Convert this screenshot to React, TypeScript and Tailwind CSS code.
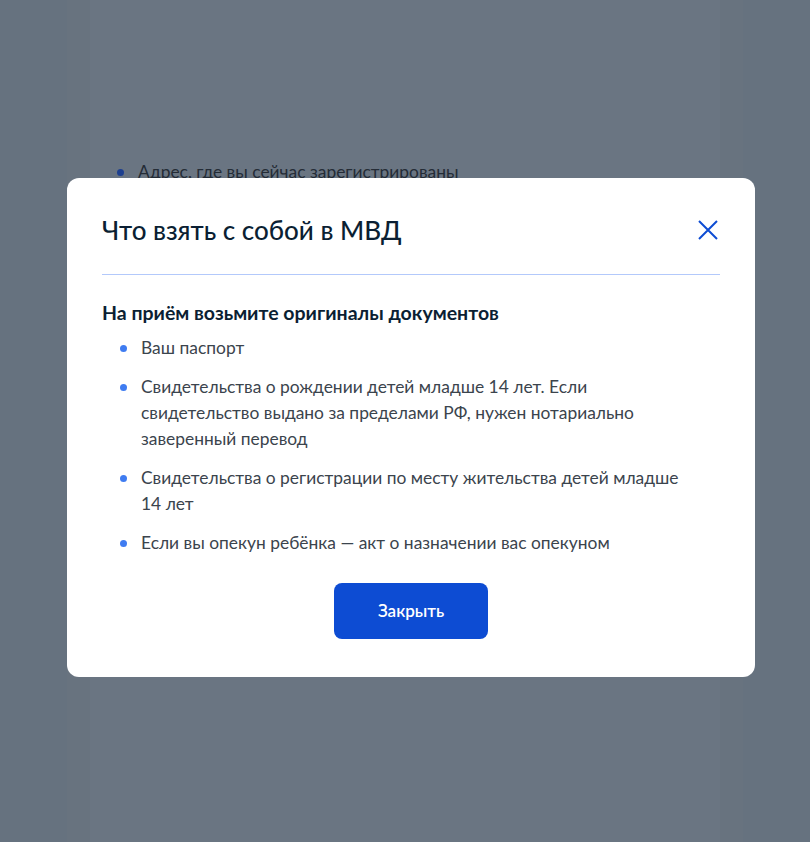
const items = [
  "Ваш паспорт",
  "Свидетельства о рождении детей младше 14 лет. Если свидетельство выдано за пределами РФ, нужен нотариально заверенный перевод",
  "Свидетельства о регистрации по месту жительства детей младше 14 лет",
  "Если вы опекун ребёнка — акт о назначении вас опекуном",
];

export default function App() {
  return (
    <div className="relative h-[842px] w-[810px] overflow-hidden bg-[#66727f] font-['Lato','Noto_Sans',sans-serif]">
      {/* page behind the overlay */}
      <div className="mx-[67px] h-full bg-[#68737f] px-[23px]">
        <div className="h-full bg-[#6a7582] pl-[27px] pt-[160px]">
          <div className="flex items-center gap-[14px] text-[17.4px] leading-[24px] text-[#242c36]">
            <span className="h-[7px] w-[7px] rounded-full bg-[#1d3f8f]" />
            <span>Адрес, где вы сейчас зарегистрированы</span>
          </div>
        </div>
      </div>

      {/* modal */}
      <div className="absolute left-[67px] top-[178px] w-[688px] rounded-[12px] bg-white px-[35px] pb-[38px] pt-[33px]">
        <div className="flex items-center justify-between">
          <h2 className="text-[26px] font-medium leading-[38px] text-[#0b1f33]">Что взять с собой в МВД</h2>
          <button type="button" className="mr-[1px] text-[#0d4cd3]">
            <svg width="22" height="22" viewBox="0 0 22 22" fill="none" stroke="currentColor" strokeWidth="2">
              <path d="M2 2L20 20M20 2L2 20" />
            </svg>
          </button>
        </div>
        <div className="mt-[25px] h-px bg-[#b3c9fb]" />

        <h3 className="mt-[25px] text-[19.5px] font-bold leading-[26px] text-[#0b1f33]">
          На приём возьмите оригиналы документов
        </h3>
        <ul className="mt-[9px] flex flex-col gap-[13px] pl-[18px]">
          {items.map((t) => (
            <li key={t} className="flex gap-[14px] text-[17.4px] leading-[26px] text-[#3b444d]">
              <span className="mt-[10px] h-[7px] w-[7px] shrink-0 rounded-full bg-[#3f7cf1]" />
              <span className="max-w-[556px]">{t}</span>
            </li>
          ))}
        </ul>

        <div className="mt-[27px] flex justify-center">
          <button
            type="button"
            className="h-[56px] w-[154px] rounded-[8px] bg-[#0d4cd3] text-[17px] font-semibold text-white"
          >
            Закрыть
          </button>
        </div>
      </div>
    </div>
  );
}
